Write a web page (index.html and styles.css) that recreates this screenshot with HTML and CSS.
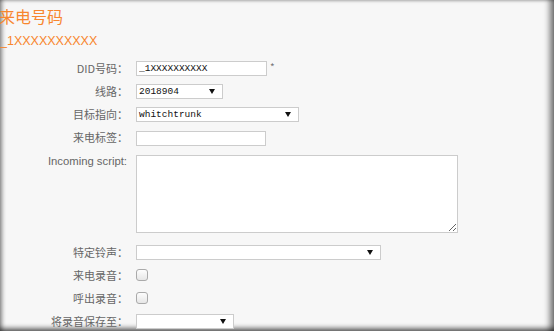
FILE: index.html
```html
<!DOCTYPE html>
<html lang="zh-CN">
<head>
    <meta charset="UTF-8">
    <title>来电号码</title>
    <link rel="stylesheet" href="styles.css">
</head>
<body>
<div class="window">
    <h2 class="title">来电号码</h2>
    <div class="subtitle">_1XXXXXXXXXX</div>

    <div class="form">
        <label class="lbl">DID号码<span class="colon">：</span></label>
        <div class="ctl"><input type="text" class="txt did" value="_1XXXXXXXXXX"><span class="req">*</span></div>

        <label class="lbl">线路<span class="colon">：</span></label>
        <div class="ctl"><span class="sel w86">2018904</span></div>

        <label class="lbl">目标指向<span class="colon">：</span></label>
        <div class="ctl"><span class="sel w162">whitchtrunk</span></div>

        <label class="lbl">来电标签<span class="colon">：</span></label>
        <div class="ctl"><input type="text" class="txt tag"></div>

        <label class="lbl top">Incoming script:</label>
        <div class="ctl"><textarea class="script"></textarea></div>

        <label class="lbl">特定铃声<span class="colon">：</span></label>
        <div class="ctl"><span class="sel w244"></span></div>

        <label class="lbl">来电录音<span class="colon">：</span></label>
        <div class="ctl"><span class="chk"></span></div>

        <label class="lbl">呼出录音<span class="colon">：</span></label>
        <div class="ctl"><span class="chk"></span></div>

        <label class="lbl">将录音保存至<span class="colon">：</span></label>
        <div class="ctl"><span class="sel w97"></span></div>
    </div>
</div>
</body>
</html>
```

FILE: styles.css
```css
body {
    margin: 0;
    background-color: #8a8a8a;
    font-family: "Noto Sans CJK SC", "Liberation Sans", sans-serif;
    overflow: hidden;
}
.window {
    height: 331px;
    box-sizing: border-box;
    background-color: #f7f7f7;
    box-shadow: inset 4px 0 4px -2px rgba(0, 0, 0, 0.45),
                inset -7px 0 6px -3px rgba(0, 0, 0, 0.55),
                inset 0 -6px 5px -3px rgba(0, 0, 0, 0.55),
                inset 0 3px 3px -2px rgba(0, 0, 0, 0.15);
    padding-top: 5px;
    overflow: hidden;
}
.title {
    margin: 0 0 0 -1px;
    font-size: 16px;
    font-weight: normal;
    line-height: 22px;
    color: #f7862e;
}
.subtitle {
    margin: 6px 0 0 0;
    font-family: "Liberation Sans", Arial, sans-serif;
    font-size: 12.5px;
    line-height: 16px;
    color: #f7862e;
}
.form {
    display: grid;
    grid-template-columns: 128px auto;
    column-gap: 8px;
    row-gap: 8px;
    margin-top: 12px;
}
.lbl {
    font-size: 11px;
    color: #666;
    text-align: right;
    line-height: 15px;
    height: 15px;
    white-space: nowrap;
}
.colon {
    font-family: "Noto Sans CJK TC", sans-serif;
}
.lbl.top {
    font-family: "Liberation Sans", Arial, sans-serif;
    font-size: 11.3px;
    margin-right: 1px;
}
.ctl {
    display: flex;
    align-items: flex-start;
}
.txt {
    box-sizing: border-box;
    height: 15px;
    margin: 0;
    padding: 0 2px;
    border: 1px solid #ccc;
    background: #fff;
    font-family: "Liberation Mono", monospace;
    font-size: 9.5px;
    color: #111;
    outline: none;
}
.did { width: 131px; }
.tag { width: 130px; margin-top: 1px; }
.req {
    font-size: 10px;
    color: #777;
    margin-left: 3px;
    line-height: 12px;
}
.sel {
    position: relative;
    box-sizing: border-box;
    display: block;
    height: 15px;
    border: 1px solid #ccc;
    background: #fff;
    font-family: "Liberation Mono", monospace;
    font-size: 9.5px;
    line-height: 13px;
    padding-left: 2px;
    color: #111;
}
.sel::after {
    content: "";
    position: absolute;
    right: 7px;
    top: 4px;
    border-left: 3px solid transparent;
    border-right: 3px solid transparent;
    border-top: 5px solid #111;
}
.w86 { width: 87px; }
.w162 { width: 163px; }
.w244 { width: 245px; }
.w97 { width: 98px; }
.script {
    box-sizing: border-box;
    width: 322px;
    height: 78px;
    margin: 1px 0 4px 0;
    border: 1px solid #ccc;
    background: #fff;
    outline: none;
}
.chk {
    box-sizing: border-box;
    display: block;
    width: 12px;
    height: 12px;
    margin-top: 1px;
    border: 1px solid #aaa;
    border-radius: 3px;
    background: linear-gradient(#fdfdfd, #e6e6e6);
}
```
